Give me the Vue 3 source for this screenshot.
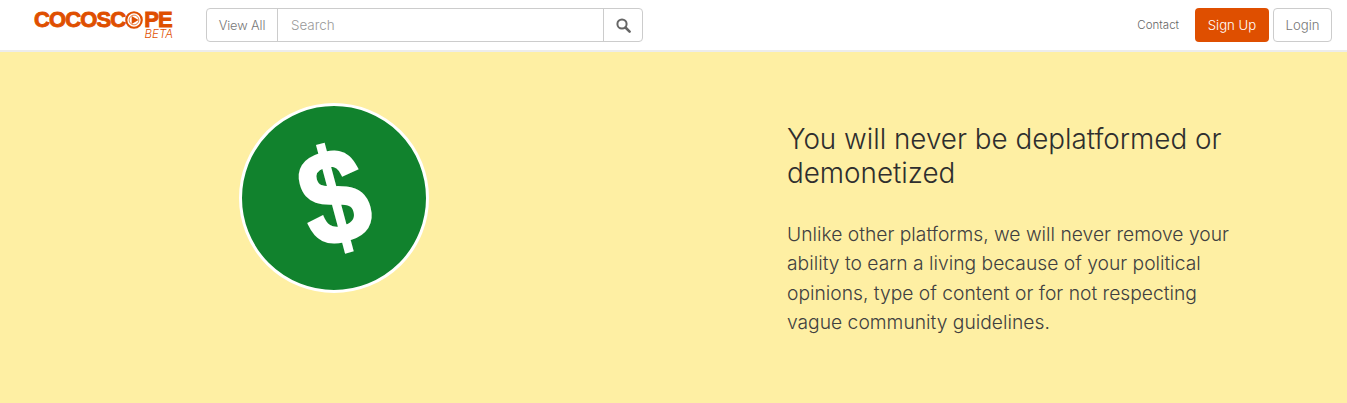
<template>
  <div class="page">
    <nav class="navbar">
      <div class="brand">
        <div class="brandName">
          <span>COCOSC</span>
          <svg class="playO" viewBox="0 0 20 20">
            <circle cx="10" cy="10" r="8.6" fill="none" stroke="#df4f00" stroke-width="2.4" />
            <circle cx="10" cy="10" r="5.4" fill="none" stroke="#df4f00" stroke-width="0.8" />
            <path d="M7.4 5.6 L15 10 L7.4 14.4 Z" fill="#df4f00" />
          </svg>
          <span>PE</span>
        </div>
        <div class="brandBeta">BETA</div>
      </div>

      <div class="searchGroup">
        <div class="viewAll">View All</div>
        <div class="searchInput">Search</div>
        <div class="searchBtn">
          <svg width="15" height="15" viewBox="0 0 15 15">
            <circle cx="6" cy="6" r="4.6" fill="none" stroke="#666" stroke-width="2" />
            <path d="M9.5 9.5 L13.6 13.6" stroke="#666" stroke-width="2.6" stroke-linecap="round" />
          </svg>
        </div>
      </div>

      <div class="navRight">
        <span class="contact">Contact</span>
        <span class="btn btnPrimary">Sign Up</span>
        <span class="btn btnDefault">Login</span>
      </div>
    </nav>

    <section class="hero">
      <div class="heroLeft">
        <div class="coin"><span class="dollar">$</span></div>
      </div>
      <div class="heroRight">
        <h2>You will never be deplatformed or demonetized</h2>
        <p>Unlike other platforms, we will never remove your ability to earn a living because of your political opinions, type of content or for not respecting vague community guidelines.</p>
      </div>
    </section>
  </div>
</template>

<script setup>
</script>

<style>
html, body {
  margin: 0;
  background: #fff;
}
</style>

<style scoped>
.page {
  width: 1347px;
  height: 403px;
  overflow: hidden;
  font-family: "Inter", "Liberation Sans", sans-serif;
  font-weight: 300;
  color: #333;
}

.navbar {
  height: 50px;
  display: flex;
  align-items: center;
  border-bottom: 2px solid #ececec;
  padding: 0 15px 0 34px;
}

.brand {
  width: 140px;
  margin-right: 32px;
  color: #df4f00;
}

.brandName {
  display: flex;
  align-items: center;
  height: 19px;
  line-height: 19px;
  font-family: "Liberation Sans", sans-serif;
  font-weight: 700;
  font-size: 22px;
  letter-spacing: -0.9px;
  -webkit-text-stroke: 0.9px #df4f00;
  white-space: nowrap;
}

.playO {
  width: 18px;
  height: 18px;
  flex: none;
  margin-right: 1px;
}

.brandBeta {
  font-style: italic;
  font-size: 11.5px;
  line-height: 11px;
  text-align: right;
  padding-right: 1px;
}

.searchGroup {
  display: flex;
  width: 437px;
  height: 34px;
  box-sizing: border-box;
  border: 1px solid #ccc;
  border-radius: 4px;
  font-size: 13.4px;
}

.viewAll {
  width: 70px;
  border-right: 1px solid #ccc;
  display: flex;
  align-items: center;
  justify-content: center;
  font-size: 12.8px;
  letter-spacing: -0.1px;
  color: #777;
}

.searchInput {
  flex: 1;
  display: flex;
  align-items: center;
  padding-left: 13px;
  color: #999;
}

.searchBtn {
  width: 38px;
  border-left: 1px solid #ccc;
  display: flex;
  align-items: center;
  justify-content: center;
}

.navRight {
  margin-left: auto;
  display: flex;
  align-items: center;
}

.contact {
  font-size: 11.5px;
  color: #666;
  margin-right: 16px;
}

.btn {
  height: 34px;
  box-sizing: border-box;
  display: flex;
  align-items: center;
  justify-content: center;
  border-radius: 4px;
  font-size: 13.2px;
}

.btnPrimary {
  width: 74px;
  background: #df4f00;
  color: #fff;
  margin-right: 4px;
}

.btnDefault {
  width: 59px;
  border: 1px solid #ccc;
  color: #777;
}

.hero {
  height: 351px;
  background: #feefa3;
  display: flex;
}

.heroLeft {
  width: 672px;
  padding-top: 51px;
  padding-left: 239px;
  box-sizing: border-box;
}

.coin {
  width: 190px;
  height: 190px;
  box-sizing: border-box;
  border-radius: 50%;
  border: 3px solid #fff;
  background: #11822d;
  display: flex;
  align-items: center;
  justify-content: center;
}

.dollar {
  font-family: "Liberation Sans", sans-serif;
  font-weight: 700;
  font-size: 134px;
  line-height: 1;
  color: #fff;
  -webkit-text-stroke: 3px #fff;
  transform: translateY(-1px) rotate(-15deg) scaleX(0.88);
}

.heroRight {
  margin-left: 115px;
  width: 455px;
  padding-top: 70px;
}

h2 {
  margin: 0 0 30px;
  font-size: 27.8px;
  line-height: 34px;
  font-weight: 300;
  color: #2e2e2e;
}

p {
  margin: 0;
  font-size: 19.25px;
  line-height: 29.3px;
  font-weight: 300;
  color: #404040;
}
</style>
